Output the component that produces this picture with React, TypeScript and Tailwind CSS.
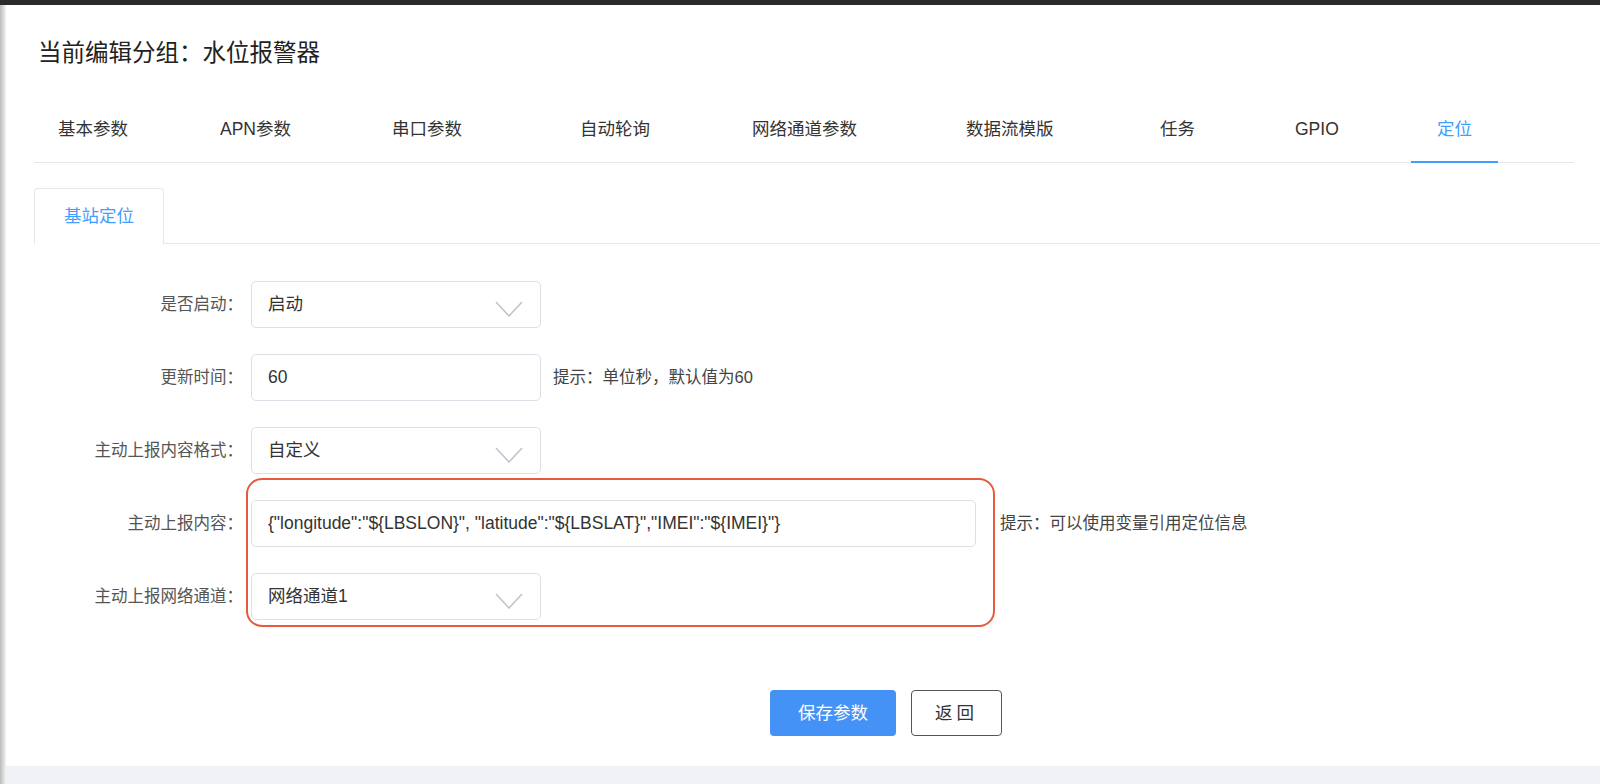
const font = { fontFamily: '"Helvetica Neue", "Liberation Sans", "Noto Sans CJK SC", sans-serif' };

const tabs = [
  { label: "基本参数", w: "w-[162px]" },
  { label: "APN参数", w: "w-[172px]" },
  { label: "串口参数", w: "w-[188px]" },
  { label: "自动轮询", w: "w-[172px]" },
  { label: "网络通道参数", w: "w-[214px]" },
  { label: "数据流模版", w: "w-[194px]" },
  { label: "任务", w: "w-[135px]" },
  { label: "GPIO", w: "w-[140px]" },
];

function Chevron() {
  return (
    <svg width="28" height="16" viewBox="0 0 28 16" className="absolute right-[17px] top-[19px]">
      <path d="M1 1 L14 15 L27 1" fill="none" stroke="#c0c4cc" strokeWidth="1.6" />
    </svg>
  );
}

function Box({ children, w = "w-[290px]", select }: { children: React.ReactNode; w?: string; select?: boolean }) {
  return (
    <div className={`relative shrink-0 ${w} h-[47px] border border-[#dcdfe6] rounded-[5px] flex items-center px-4 text-[17.5px] text-[#333]`}>
      {children}
      {select && <Chevron />}
    </div>
  );
}

function Row({ label, children }: { label: string; children: React.ReactNode }) {
  return (
    <div className="flex items-center h-[47px]">
      <div className="w-[245px] shrink-0 pr-2 text-right text-[16.5px] text-[#555]">{label}</div>
      {children}
    </div>
  );
}

export default function App() {
  return (
    <div className="w-[1600px] h-[784px] bg-white flex flex-col overflow-hidden" style={font}>
      <div className="h-[5px] bg-[#2a2a2a]" />
      <div className="flex flex-1">
        <div className="w-[6px] bg-gradient-to-r from-[#bbb] to-[#f3f3f3]" />
        <div className="flex-1 flex flex-col">
          <h1 className="pl-[32px] pt-[31px] text-[23.5px] text-[#222] h-[92px]">当前编辑分组：水位报警器</h1>
          <div className="ml-[28px] mr-[26px] flex h-[66px] border-b border-[#e4e7ed] text-[17.5px] text-[#333]">
            {tabs.map((t) => (
              <div key={t.label} className={`${t.w} shrink-0 flex items-center justify-start pl-6`}>{t.label}</div>
            ))}
            <div className="w-[87px] shrink-0 flex items-center justify-center text-[#409eff] border-b-2 border-[#409eff] -mb-px">定位</div>
          </div>
          <div className="flex mt-[25px] ml-[28px] h-[56px]">
            <div className="w-[130px] border border-b-0 border-[#e4e7ed] rounded-t-[4px] flex items-center justify-center text-[17.5px] text-[#409eff] bg-white">基站定位</div>
            <div className="flex-1 border-b border-[#e4e7ed]" />
          </div>
          <div className="flex flex-col gap-[26px] mt-[37px]">
            <Row label="是否启动：">
              <Box select>启动</Box>
            </Row>
            <Row label="更新时间：">
              <Box>60</Box>
              <span className="ml-3 text-[16.5px] text-[#444]">提示：单位秒，默认值为60</span>
            </Row>
            <Row label="主动上报内容格式：">
              <Box select>自定义</Box>
            </Row>
            <div className="relative flex flex-col gap-[26px]">
              <div className="absolute left-[240px] top-[-22px] w-[749px] h-[149px] border-2 border-[#e85a3f] rounded-[16px] pointer-events-none" />
              <Row label="主动上报内容：">
                <Box w="w-[725px]">{'{"longitude":"${LBSLON}", "latitude":"${LBSLAT}","IMEI":"${IMEI}"}'}</Box>
                <span className="ml-6 text-[16.5px] text-[#444]">提示：可以使用变量引用定位信息</span>
              </Row>
              <Row label="主动上报网络通道：">
                <Box select>网络通道1</Box>
              </Row>
            </div>
          </div>
          <div className="flex gap-[15px] mt-[70px] ml-[764px]">
            <button className="w-[126px] h-[46px] rounded-[4px] bg-[#4592f7] text-white text-[17.5px]">保存参数</button>
            <button className="w-[91px] h-[46px] rounded-[4px] border border-[#555] text-[#333] text-[17.5px] tracking-[4px]">返回</button>
          </div>
          <div className="flex-1" />
          <div className="h-[18px] bg-[#f0f2f5]" />
        </div>
      </div>
    </div>
  );
}
